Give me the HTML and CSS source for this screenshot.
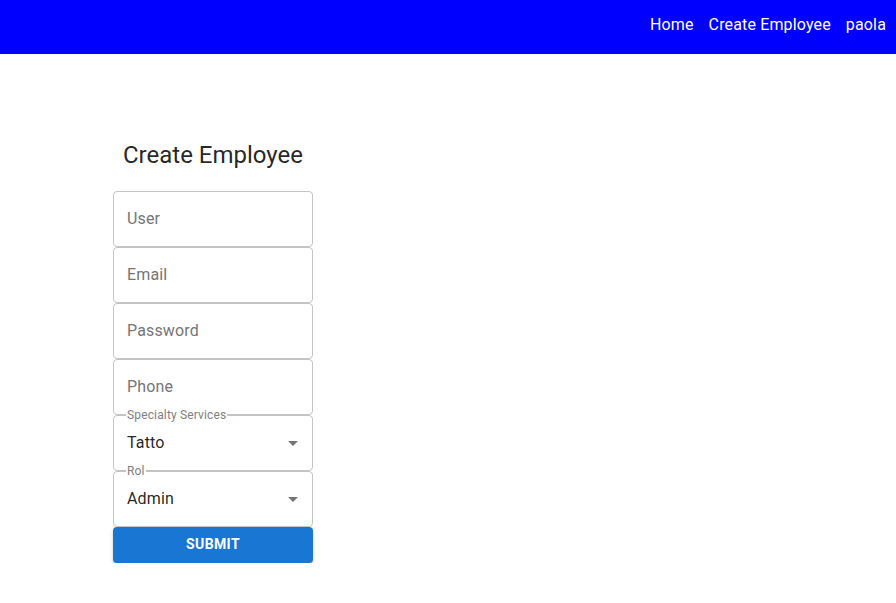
FILE: index.html
```html
<!DOCTYPE html>
<html>
<head>
<meta charset="utf-8">
<link rel="stylesheet" href="styles.css">
</head>
<body>
<header class="topbar">
  <nav class="nav">
    <a class="nav-link">Home</a>
    <a class="nav-link">Create Employee</a>
    <a class="nav-link">paola</a>
  </nav>
</header>
<main class="page">
  <section class="form-card">
    <h1 class="title">Create Employee</h1>
    <form class="form">
      <div class="field"><span class="placeholder">User</span></div>
      <div class="field"><span class="placeholder">Email</span></div>
      <div class="field"><span class="placeholder">Password</span></div>
      <div class="field"><span class="placeholder">Phone</span></div>
      <div class="field select">
        <span class="notch">Specialty Services</span>
        <span class="value">Tatto</span>
        <svg class="arrow" viewBox="0 0 24 24" width="24" height="24"><path d="M7 10l5 5 5-5z"/></svg>
      </div>
      <div class="field select">
        <span class="notch">Rol</span>
        <span class="value">Admin</span>
        <svg class="arrow" viewBox="0 0 24 24" width="24" height="24"><path d="M7 10l5 5 5-5z"/></svg>
      </div>
      <button type="button" class="submit">SUBMIT</button>
    </form>
  </section>
</main>
</body>
</html>
```
FILE: styles.css
```css
html, body {
  margin: 0;
  padding: 0;
  background: #fff;
  font-family: Roboto, "Liberation Sans", Arial, sans-serif;
}
.topbar {
  height: 54px;
  background: #0000ff;
  display: flex;
  align-items: center;
  justify-content: flex-end;
  padding-right: 10px;
}
.nav {
  display: flex;
  gap: 15px;
  margin-top: -4px;
}
.nav-link {
  color: #fff;
  font-size: 16px;
  line-height: 24px;
  letter-spacing: 0.15px;
}
.page {
  padding: 85px 0 0 113px;
}
.form-card {
  width: 200px;
  display: flex;
  flex-direction: column;
}
.title {
  margin: 0 0 20px;
  font-size: 24px;
  font-weight: 400;
  line-height: 32px;
  text-align: center;
  color: rgba(0,0,0,0.87);
}
.form {
  display: flex;
  flex-direction: column;
}
.field {
  position: relative;
  box-sizing: border-box;
  height: 56px;
  border: 1px solid #c4c4c4;
  border-radius: 4px;
  display: flex;
  align-items: center;
  padding: 0 13px 2px;
  font-size: 16px;
  letter-spacing: 0.15px;
}
.placeholder {
  color: #757575;
}
.value {
  color: rgba(0,0,0,0.87);
  flex: 1;
}
.notch {
  position: absolute;
  top: -9px;
  left: 12px;
  padding: 0 1px;
  background: #fff;
  font-size: 12px;
  line-height: 16px;
  letter-spacing: 0.15px;
  color: #808080;
}
.arrow {
  position: absolute;
  right: 7px;
  top: 15px;
  fill: #757575;
}
.submit {
  height: 36px;
  border: none;
  border-radius: 4px;
  background: #1976d2;
  color: #fff;
  font-family: Roboto, "Liberation Sans", Arial, sans-serif;
  font-size: 14px;
  font-weight: 700;
  letter-spacing: 0.4px;
  padding: 0 0 2px;
  box-shadow: 0 3px 1px -2px rgba(0,0,0,0.2), 0 2px 2px 0 rgba(0,0,0,0.14), 0 1px 5px 0 rgba(0,0,0,0.12);
}
```
